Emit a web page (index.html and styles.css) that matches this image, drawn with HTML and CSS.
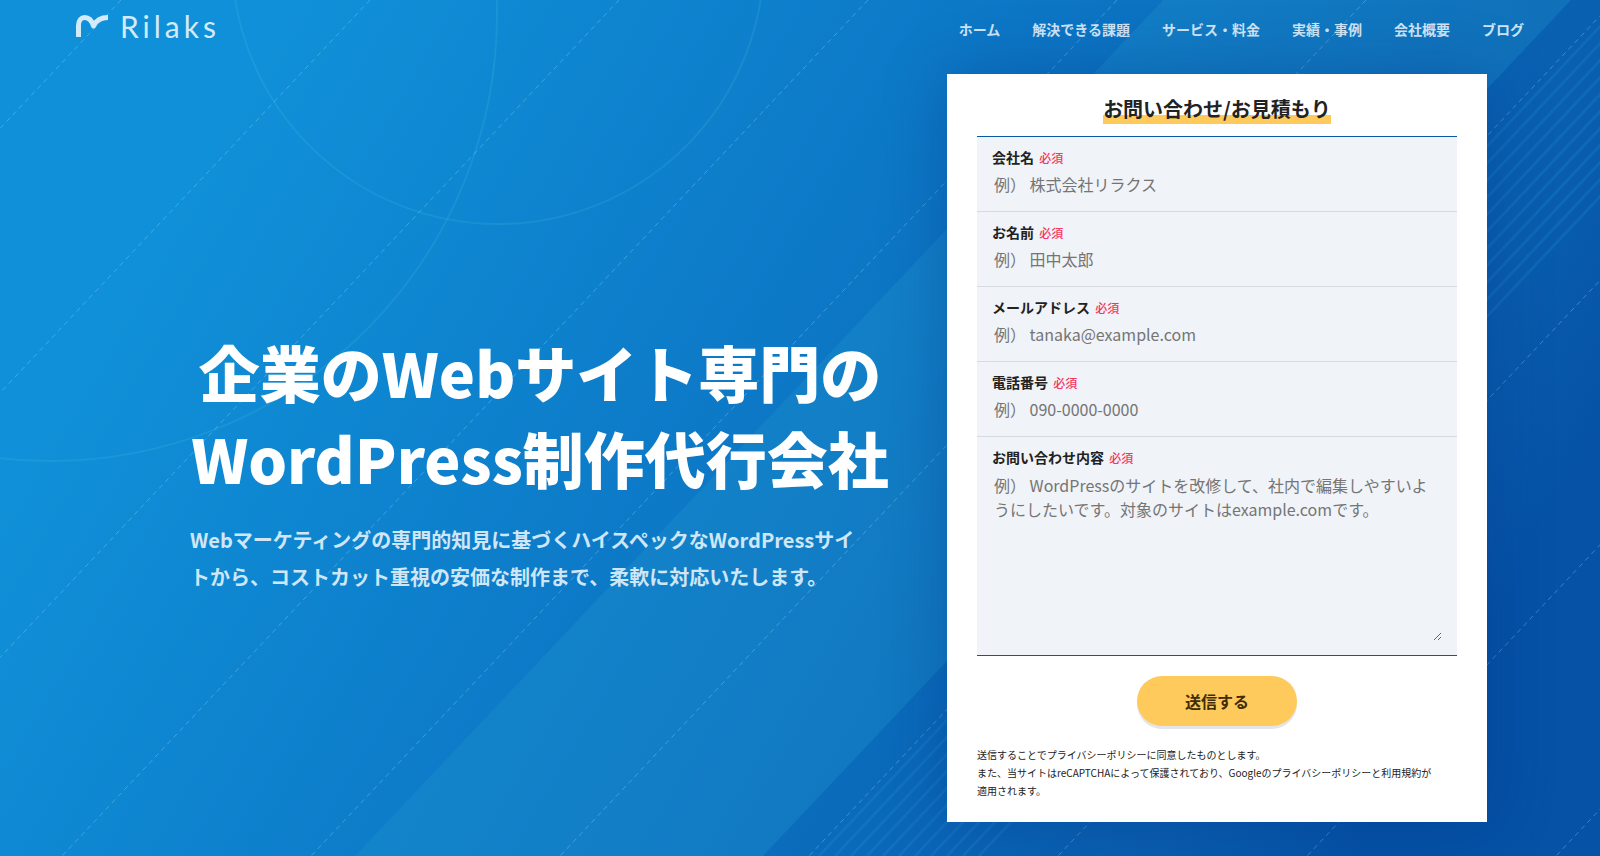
FILE: index.html
```html
<!DOCTYPE html>
<html lang="ja">
<head>
<meta charset="utf-8">
<meta name="viewport" content="width=device-width, initial-scale=1">
<title>Rilaks</title>
<link rel="stylesheet" href="styles.css">
</head>
<body>
<div class="hero">
  <svg class="hero-bg" viewBox="0 0 1600 856" preserveAspectRatio="xMidYMid slice" aria-hidden="true">
    <defs>
      <linearGradient id="base" gradientUnits="userSpaceOnUse" x1="240" y1="100" x2="1400" y2="780">
        <stop offset="0" stop-color="#1090d8"/>
        <stop offset="0.5" stop-color="#0c75c4"/>
        <stop offset="0.75" stop-color="#0a64b5"/>
        <stop offset="0.88" stop-color="#095dae"/>
        <stop offset="1" stop-color="#0552a6"/>
      </linearGradient>
    </defs>
    <rect width="1600" height="856" fill="url(#base)"/>
    <path class="band" d="M1163 0H1571L763 856H355Z"/>
    <g class="rings">
      <circle cx="498" cy="-42" r="266"/>
      <circle cx="50" cy="14" r="447"/>
    </g>
    <g class="stripes">
      <path d="M1625 0l-806 856M1641 0l-806 856M1657 0l-806 856M1673 0l-806 856M1689 0l-806 856M1705 0l-806 856M1721 0l-806 856M1737 0l-806 856M1753 0l-806 856M1769 0l-806 856M1785 0l-806 856"/>
    </g>
    <g class="dashes">
      <path d="M121 0l-806 856M370 0l-806 856M619 0l-806 856M868 0l-806 856M1117 0l-806 856M1366 0l-806 856M1615 0l-806 856M1864 0l-806 856M2113 0l-806 856M2362 0l-806 856"/>
    </g>
  </svg>

  <header class="header">
    <a class="logo" href="#">
      <svg class="logo-mark" viewBox="0 0 32 22" aria-hidden="true">
        <path d="M2.500 22V10.500C2.500 0 14 -0.500 17.500 11C20 5.500 24 2.500 32 2.500" stroke-linejoin="round"/>
      </svg>
      <span class="logo-text">Rilaks</span>
    </a>
    <nav class="nav">
      <a href="#">ホーム</a>
      <a href="#">解決できる課題</a>
      <a href="#">サービス・料金</a>
      <a href="#">実績・事例</a>
      <a href="#">会社概要</a>
      <a href="#">ブログ</a>
    </nav>
  </header>

  <main class="main">
    <section class="copy">
      <h1 class="headline">企業のWebサイト専門の<br>WordPress制作代行会社</h1>
      <p class="lead">Webマーケティングの専門的知見に基づくハイスペックなWordPressサイ<br>トから、コストカット重視の安価な制作まで、柔軟に対応いたします。</p>
    </section>

    <form class="card">
      <h2 class="card-title"><span class="marker">お問い合わせ/お見積もり</span></h2>
      <div class="fields">
        <div class="field">
          <label class="label" for="company">会社名 <span class="required">必須</span></label>
          <input class="control" id="company" type="text" placeholder="例） 株式会社リラクス">
        </div>
        <div class="field">
          <label class="label" for="name">お名前 <span class="required">必須</span></label>
          <input class="control" id="name" type="text" placeholder="例） 田中太郎">
        </div>
        <div class="field">
          <label class="label" for="email">メールアドレス <span class="required">必須</span></label>
          <input class="control" id="email" type="email" placeholder="例） tanaka@example.com">
        </div>
        <div class="field">
          <label class="label" for="tel">電話番号 <span class="required">必須</span></label>
          <input class="control" id="tel" type="tel" placeholder="例） 090-0000-0000">
        </div>
        <div class="field">
          <label class="label" for="message">お問い合わせ内容 <span class="required">必須</span></label>
          <textarea class="control control-area" id="message" placeholder="例） WordPressのサイトを改修して、社内で編集しやすいようにしたいです。対象のサイトはexample.comです。"></textarea>
        </div>
      </div>
      <button class="submit" type="button">送信する</button>
      <p class="notes">送信することでプライバシーポリシーに同意したものとします。<br>また、当サイトはreCAPTCHAによって保護されており、Googleのプライバシーポリシーと利用規約が<br>適用されます。</p>
    </form>
  </main>
</div>
</body>
</html>
```

FILE: styles.css
```css
* {
  box-sizing: border-box;
}

body {
  margin: 0;
  color: #222;
  font-family: "Noto Sans CJK JP", sans-serif;
}

h1,
h2,
p {
  margin: 0;
}

.hero {
  position: relative;
  min-height: 100vh;
  padding-bottom: 34px;
  overflow: hidden;
  background: #0b75c6;
}

.hero-bg {
  position: absolute;
  inset: 0;
  width: 100%;
  height: 100%;
}

.band {
  fill: #1e96cc;
  fill-opacity: 0.32;
}

.rings {
  fill: none;
  stroke: #4cc3e6;
  stroke-opacity: 0.18;
  stroke-width: 2;
}

.stripes {
  fill: none;
  stroke: #28a0dc;
  stroke-opacity: 0.18;
  stroke-width: 3;
}

.dashes {
  fill: none;
  stroke: #9adcff;
  stroke-opacity: 0.35;
  stroke-width: 1;
  stroke-dasharray: 5 4;
}

.header {
  position: relative;
  display: flex;
  align-items: center;
  justify-content: space-between;
  height: 60px;
  padding: 0 76px;
}

.logo {
  display: flex;
  align-items: center;
  gap: 12px;
  height: 44px;
  margin-bottom: 8px;
  color: #d3eaf8;
  text-decoration: none;
}

.logo-mark {
  width: 32px;
  height: 22px;
  fill: none;
  stroke: currentColor;
  stroke-width: 5;
}

.logo-text {
  font: 400 30px/44px Lato, sans-serif;
  letter-spacing: 4px;
}

.nav {
  display: flex;
  gap: 32px;
  margin-bottom: 2px;
}

.nav a {
  color: #cfe5f6;
  font-size: 14px;
  font-weight: 700;
  line-height: 20px;
  text-decoration: none;
}

.main {
  position: relative;
  display: grid;
  grid-template-columns: 1fr 540px;
  align-items: center;
  gap: 57px;
  padding: 14px 113px 0 190px;
}

.copy {
  padding-top: 28px;
}

.headline {
  color: #fff;
  font-size: 61px;
  font-weight: 900;
  line-height: 86px;
  text-align: center;
  white-space: nowrap;
}

.lead {
  margin-top: 20px;
  color: #cfe6f7;
  font-size: 20px;
  font-weight: 700;
  line-height: 37px;
  white-space: nowrap;
}

.card {
  padding: 20px 30px 22px;
  background: #fff;
  box-shadow: 0 0 60px rgba(0, 40, 120, 0.3);
}

.card-title {
  font-size: 20px;
  font-weight: 700;
  line-height: 30px;
  text-align: center;
}

.marker {
  display: inline-block;
  background: linear-gradient(transparent 70%, #ffca5c 70%);
}

.fields {
  margin-top: 12px;
  border-top: 1px solid #0858a8;
  border-bottom: 1px solid #0858a8;
  background: #f0f3f8;
}

.field {
  padding: 10px 15px 14px;
}

.field + .field {
  border-top: 1px solid #d5dbe1;
}

.label {
  display: block;
  margin-bottom: 4px;
  font-size: 14px;
  font-weight: 700;
  line-height: 20px;
}

.required {
  margin-left: 2px;
  color: #f7355e;
  font-size: 12px;
  font-weight: 500;
  line-height: 12px;
}

.control {
  display: block;
  width: 100%;
  height: 26px;
  padding: 1px 2px;
  border: 0;
  background: transparent;
  font-family: inherit;
  font-size: 16px;
  line-height: 24px;
}

.control::placeholder {
  color: #757575;
}

.control-area {
  height: 170px;
  padding: 2px;
  resize: both;
}

.submit {
  display: block;
  width: 160px;
  height: 50px;
  margin: 20px auto;
  border: 0;
  border-radius: 25px;
  background: #ffca5c;
  box-shadow: 0 3px 0 #e4e5e8;
  color: #402d06;
  font-family: inherit;
  font-size: 16px;
  font-weight: 700;
}

.notes {
  font-size: 10px;
  line-height: 18px;
  white-space: nowrap;
}
```
